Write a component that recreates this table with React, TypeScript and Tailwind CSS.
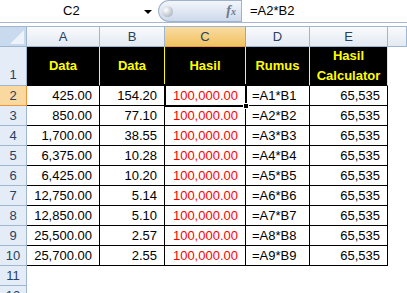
const cols = ["A", "B", "C", "D", "E"];

const rows = [
  ["425.00", "154.20", "=A1*B1"],
  ["850.00", "77.10", "=A2*B2"],
  ["1,700.00", "38.55", "=A3*B3"],
  ["6,375.00", "10.28", "=A4*B4"],
  ["6,425.00", "10.20", "=A5*B5"],
  ["12,750.00", "5.14", "=A6*B6"],
  ["12,850.00", "5.10", "=A7*B7"],
  ["25,500.00", "2.57", "=A8*B8"],
  ["25,700.00", "2.55", "=A9*B9"],
];

const headers = ["Data", "Data", "Hasil", "Rumus"];

const colHead =
  "flex items-center justify-center border-r border-b border-[#9eb6ce] bg-[linear-gradient(#f9fbfd,#e3e9f2)] text-[13px] text-[#27415f]";
const colHeadActive =
  "flex items-center justify-center border-r border-b border-[#f29536] bg-[linear-gradient(#f9dca4,#f1c15f)] text-[13px] text-[#27415f]";
const rowHead =
  "flex items-center justify-center border-r border-b border-[#9eb6ce] bg-[#e4ecf7] text-[13px] text-[#27415f]";
const rowHeadActive =
  "flex items-center justify-center border-r border-b border-[#f29536] bg-[#f9d99f] text-[13px] text-[#27415f]";
const cell = "flex items-center border-r border-b border-black text-[13px] text-black";

function FormulaBar() {
  return (
    <div className="flex h-[23px] border-b border-[#a5b8d0] bg-white">
      <div className="relative flex w-[158px] items-center pl-[63px] text-[13px] text-black">
        C2
        <span className="absolute left-[144px] top-[10px] h-0 w-0 border-x-[4px] border-t-[4px] border-x-transparent border-t-black" />
      </div>
      <div className="flex w-[83px] items-center justify-between rounded-l-full border border-r-0 border-[#9fb2cc] bg-[linear-gradient(#f3f6fb,#cdd9ea)] pl-[3px] pr-[5px]">
        <span className="h-[11px] w-[11px] rounded-full bg-[radial-gradient(circle_at_35%_35%,#ffffff,#b9bfc8_70%,#8d96a3)]" />
        <span className="font-['Liberation_Serif',serif] text-[14px] font-bold italic leading-none text-[#6c7a8c]">
          f<span className="text-[10px]">x</span>
        </span>
      </div>
      <div className="flex flex-1 items-center border-l border-[#9fb2cc] pl-[8px] text-[13px] text-black">
        =A2*B2
      </div>
    </div>
  );
}

export default function App() {
  return (
    <div className="relative h-[293px] w-[407px] overflow-hidden bg-white font-['Liberation_Sans',Arial,sans-serif]">
      <FormulaBar />
      <div className="h-[3px] bg-white" />
      <div className="border-t border-[#9eb6ce]">
        <div className="grid grid-cols-[27px_73px_65px_81px_64px_78px_1fr] grid-rows-[20px_39px_repeat(11,20px)]">
          {/* corner */}
          <div className="relative border-r border-b border-[#9eb6ce] bg-[#c9d9ee]">
            <svg className="absolute bottom-[2px] right-[2px]" width="14" height="14" viewBox="0 0 14 14">
              <polygon points="14,0 14,14 0,14" fill="#eef3fa" />
            </svg>
          </div>
          {cols.map((c) => (
            <div key={c} className={c === "C" ? colHeadActive : colHead}>
              {c}
            </div>
          ))}
          <div className={colHead} />

          {/* row 1 */}
          <div className="flex items-end justify-center border-r border-b border-[#9eb6ce] bg-[#e4ecf7] pb-[1px] text-[13px] text-[#27415f]">
            1
          </div>
          {headers.map((h, i) => (
            <div
              key={i}
              className="flex items-center justify-center border-r border-b border-r-[#ffff00] border-b-black bg-black text-[13px] font-bold text-[#ffff00]"
            >
              {h}
            </div>
          ))}
          <div className="flex flex-col items-center justify-center border-r border-b border-r-[#ffff00] border-b-black bg-black text-[13px] font-bold leading-[20px] text-[#ffff00]">
            <span>Hasil</span>
            <span>Calculator</span>
          </div>
          <div />

          {rows.map((r, i) => (
            <div key={i} className="contents">
              <div className={i === 0 ? rowHeadActive : rowHead}>{i + 2}</div>
              <div className={`${cell} justify-end pr-[7px]`}>{r[0]}</div>
              <div className={`${cell} justify-end pr-[7px]`}>{r[1]}</div>
              <div className={`${cell} justify-end pr-[7px] !text-[#ff0000]`}>100,000.00</div>
              <div className={`${cell} pl-[6px]`}>{r[2]}</div>
              <div className={`${cell} justify-end pr-[7px]`}>65,535</div>
              <div />
            </div>
          ))}

          <div className={rowHead}>11</div>
          <div className="col-span-6" />
          <div className={rowHead}>12</div>
          <div className="col-span-6" />
        </div>
      </div>

      {/* active cell C2 */}
      <div className="pointer-events-none absolute left-[164px] top-[84px] h-[23px] w-[83px] border-2 border-black">
        <div className="h-full w-full border border-white" />
        <span className="absolute -bottom-[4px] -right-[4px] h-[6px] w-[6px] border border-white bg-black" />
      </div>
    </div>
  );
}
